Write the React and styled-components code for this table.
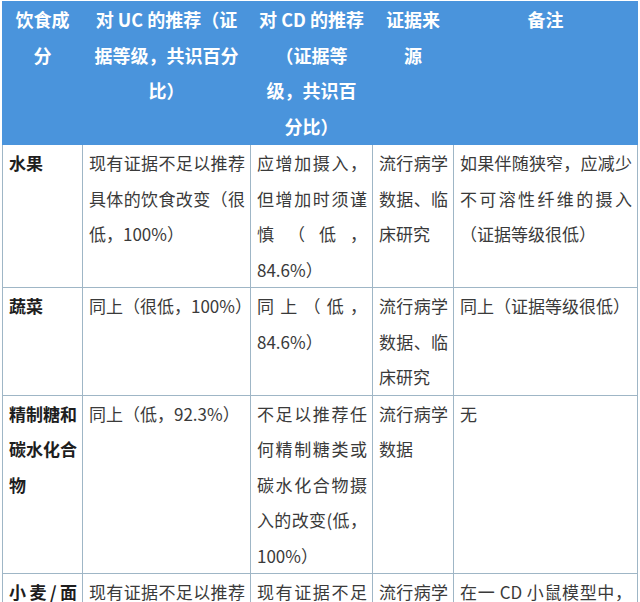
import React from "react";
import styled, { createGlobalStyle } from "styled-components";

const GlobalStyle = createGlobalStyle`
  html, body {
    margin: 0;
    padding: 0;
    background: #ffffff;
  }
  body {
    font-family: "Noto Sans CJK SC", "Microsoft YaHei", sans-serif;
  }
`;

const Page = styled.div`
  padding: 1px 3px 0 2px;
  width: 640px;
  box-sizing: border-box;
`;

const Table = styled.table`
  width: 635px;
  border-collapse: collapse;
  table-layout: fixed;
`;

const HeadCell = styled.th`
  background: #4a94dc;
  color: #ffffff;
  font-size: 18px;
  font-weight: 700;
  line-height: 35.5px;
  text-align: center;
  vertical-align: top;
  padding: 0 5px;
  border: 1px solid #4a94dc;
  border-left-color: ${(p) => (p.$first ? "#4a94dc" : "#4a94dc")};
`;

const Cell = styled.td`
  color: ${(p) => (p.$bold ? "#1e1e1e" : "#3a3a3a")};
  font-size: 17px;
  font-weight: ${(p) => (p.$bold ? 700 : 400)};
  line-height: 35.5px;
  text-align: justify;
  vertical-align: top;
  padding: 0 5px 0 6px;
  border: 1px solid #9fb6c6;
  white-space: ${(p) => (p.$nowrap ? "nowrap" : "normal")};
`;

const head = [
  ["饮食成", "分"],
  ["对 UC 的推荐（证", "据等级，共识百分", "比）"],
  ["对 CD 的推荐", "（证据等", "级，共识百", "分比）"],
  ["证据来", "源"],
  ["备注"],
];

const rows = [
  [
    "水果",
    "现有证据不足以推荐具体的饮食改变（很低，100%）",
    "应增加摄入，但增加时须谨慎（低，84.6%）",
    "流行病学数据、临床研究",
    "如果伴随狭窄，应减少不可溶性纤维的摄入（证据等级很低）",
  ],
  [
    "蔬菜",
    "同上（很低，100%）",
    "同上（低，84.6%）",
    "流行病学数据、临床研究",
    "同上（证据等级很低）",
  ],
  [
    "精制糖和碳水化合物",
    "同上（低，92.3%）",
    "不足以推荐任何精制糖类或碳水化合物摄入的改变(低，100%）",
    "流行病学数据",
    "无",
  ],
  [
    "小麦/面筋",
    "现有证据不足以推荐具体的饮食改变（很低，100%）",
    "现有证据不足以推荐具体的饮食改变（很低，100%）",
    "流行病学数据",
    "在一 CD 小鼠模型中，麸质可加重肠道炎症",
  ],
];

const widths = [80, 168, 122, 81, 184];

export default function App() {
  return (
    <Page>
      <GlobalStyle />
      <Table>
        <colgroup>
          {widths.map((w, i) => (
            <col key={i} style={{ width: w }} />
          ))}
        </colgroup>
        <thead>
          <tr>
            {head.map((lines, i) => (
              <HeadCell key={i}>
                {lines.map((l, j) => (
                  <React.Fragment key={j}>
                    {j > 0 && <br />}
                    {l}
                  </React.Fragment>
                ))}
              </HeadCell>
            ))}
          </tr>
        </thead>
        <tbody>
          {rows.map((row, i) => (
            <tr key={i}>
              {row.map((text, j) => (
                <Cell key={j} $bold={j === 0} $nowrap={i === 1 && j === 1}>
                  {text}
                </Cell>
              ))}
            </tr>
          ))}
        </tbody>
      </Table>
    </Page>
  );
}
